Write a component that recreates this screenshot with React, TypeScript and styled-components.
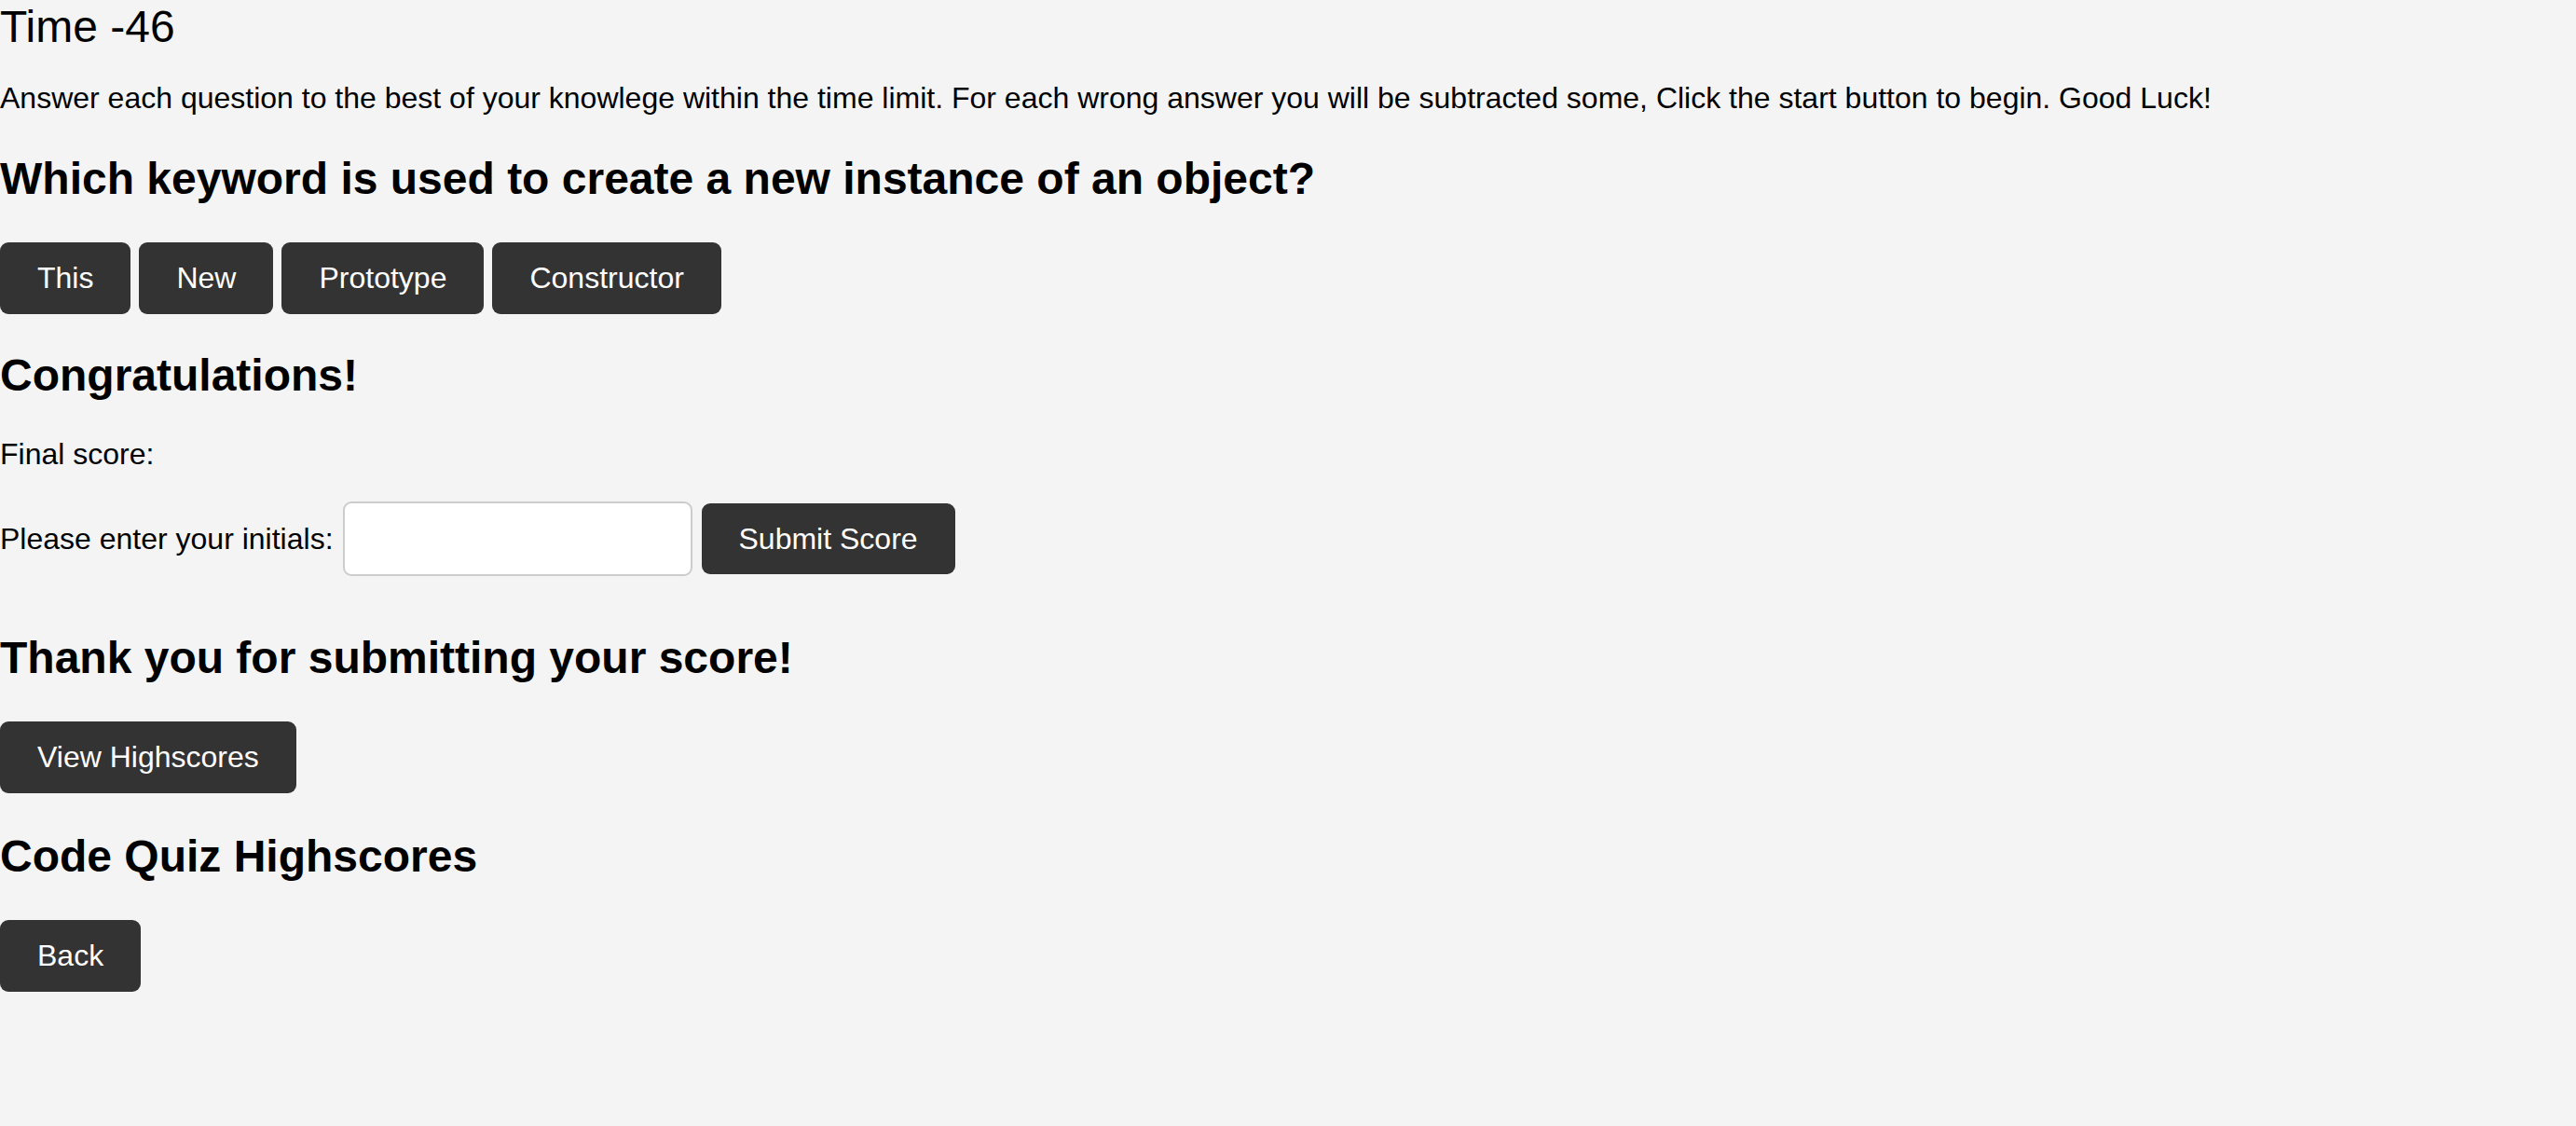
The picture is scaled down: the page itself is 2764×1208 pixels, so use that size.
import styled, { createGlobalStyle } from "styled-components"

const GlobalStyle = createGlobalStyle`
  body {
    margin: 0;
    background: #f4f4f4;
    color: #000;
    font-family: "Liberation Sans", Arial, Helvetica, sans-serif;
  }
`

const choices = ["This", "New", "Prototype", "Constructor"]

const App = () => {
  return (
    <>
      <GlobalStyle />
      <Page>
        <Timer>Time -46</Timer>
        <Intro>
          Answer each question to the best of your knowlege within the time limit. For each wrong
          answer you will be subtracted some, Click the start button to begin. Good Luck!
        </Intro>

        <Heading $top={40}>Which keyword is used to create a new instance of an object?</Heading>
        <ButtonRow>
          {choices.map((choice) => (
            <QuizButton key={choice}>{choice}</QuizButton>
          ))}
        </ButtonRow>

        <Heading $top={38}>Congratulations!</Heading>
        <ScoreText>Final score:</ScoreText>
        <InitialsRow>
          <label htmlFor="initials">Please enter your initials:</label>
          <InitialsInput id="initials" type="text" />
          <QuizButton>Submit Score</QuizButton>
        </InitialsRow>

        <Heading $top={60}>Thank you for submitting your score!</Heading>
        <Spaced>
          <QuizButton>View Highscores</QuizButton>
        </Spaced>

        <Heading $top={40}>Code Quiz Highscores</Heading>
        <Spaced>
          <QuizButton>Back</QuizButton>
        </Spaced>
      </Page>
    </>
  )
}

export default App

const Page = styled.div`
  display: flex;
  flex-direction: column;
  align-items: flex-start;
  min-height: 1208px;
  line-height: 1.15;
`

const Timer = styled.div`
  font-size: 48px;
  margin-top: 1px;
`

const Intro = styled.p`
  font-size: 32px;
  margin: 31px 0 0;
`

const Heading = styled.h2<{ $top: number }>`
  font-size: 48px;
  font-weight: 700;
  margin: ${(p) => p.$top}px 0 0;
`

const ButtonRow = styled.div`
  display: flex;
  gap: 9px;
  margin-top: 41px;
`

const Spaced = styled.div`
  margin-top: 41px;
`

const QuizButton = styled.button`
  font-family: inherit;
  font-size: 32px;
  line-height: 1.15;
  padding: 20px 40px;
  background: #333;
  color: #fff;
  border: none;
  border-radius: 9px;
  cursor: pointer;
`

const ScoreText = styled.p`
  font-size: 32px;
  margin: 39px 0 0;
`

const InitialsRow = styled.div`
  display: flex;
  align-items: center;
  gap: 10px;
  margin-top: 32px;
  font-size: 32px;
  height: 80px;
`

const InitialsInput = styled.input`
  box-sizing: border-box;
  width: 375px;
  height: 80px;
  border: 2px solid #ccc;
  border-radius: 9px;
  background: #fff;
  font-family: inherit;
  font-size: 32px;
  padding: 0 12px;
`
